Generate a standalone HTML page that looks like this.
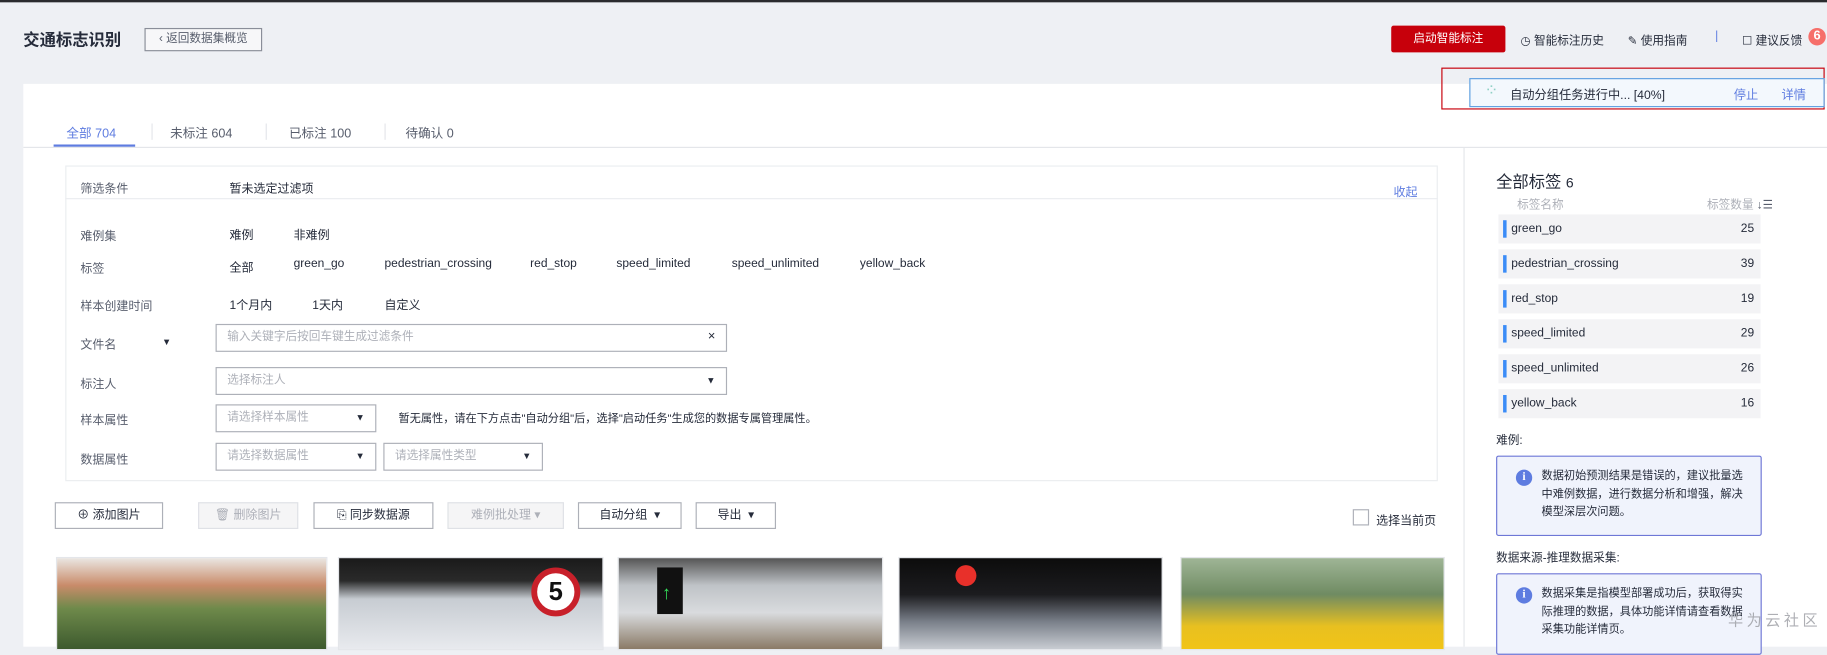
<!DOCTYPE html>
<html><head><meta charset="utf-8"><style>
*{box-sizing:border-box;margin:0;padding:0}
body{width:1827px;height:647px;overflow:hidden;background:#eef0f4;font-family:"Liberation Sans","Noto Sans CJK SC",sans-serif;color:#252b3a}
#s{position:absolute;left:0;top:0;width:1568px;height:555px;transform:scale(1.16518);transform-origin:0 0;font-size:10.3px}
.a{position:absolute;white-space:nowrap}
.btn{position:absolute;border:1px solid #adb0b8;background:#fff;height:23px;line-height:21px;text-align:center;font-size:10.3px;color:#252b3a}
.dis{background:#f5f5f6;border-color:#dfe1e6;color:#adb0b8}
.inp{position:absolute;border:1px solid #adb0b8;background:#fff;height:24px;line-height:22px;padding-left:9px;color:#adb0b8;font-size:10px}
.tri{position:absolute;right:9px;top:0;color:#252b3a;font-size:8px}
.gl{color:#575d6c}
.row{position:absolute;left:1286px;width:225px;height:25px;background:#f3f3f5;line-height:25px}
.row i{position:absolute;left:4px;top:5px;width:3px;height:15px;background:#3b8cf7}
.row span{position:absolute;left:11px;font-size:10.3px}
.row b{position:absolute;right:-3px;width:20px;font-weight:normal}
.info{position:absolute;left:1284px;width:228px;border:1px solid #6e77d6;background:#f0f3fc;border-radius:2px;padding:9px 6px 0 38px;font-size:9.6px;line-height:15.5px;color:#252b3a}
.info .ic{position:absolute;left:16px;top:11px;width:14px;height:14px;border-radius:50%;background:#5e7ce0;color:#fff;font-size:10px;line-height:14px;text-align:center;font-weight:bold;font-family:"Liberation Serif",serif}
.img{position:absolute;top:478px;height:80px;border:1px solid #e4e6ea}
</style></head><body><div id="s">
<div class="a" style="left:0;top:0;width:1568px;height:2px;background:#2a2b2e"></div>
<div class="a" style="left:20px;top:24px;font-size:14px;font-weight:bold;color:#252b3a">交通标志识别</div>
<div class="btn" style="left:124px;top:24px;width:101px;height:20px;line-height:18px;border-color:#8a8e99;background:#f7f7f9;font-size:10px;color:#575d6c">‹ 返回数据集概览</div>
<div class="a" style="left:1194px;top:22px;width:98px;height:23px;background:#c7000b;border-radius:2px;color:#fff;text-align:center;line-height:23px;font-size:10px">启动智能标注</div>
<div class="a" style="left:1305px;top:26px;font-size:10px">◷ 智能标注历史</div>
<div class="a" style="left:1397px;top:26px;font-size:10px">✎ 使用指南</div>
<div class="a" style="left:1472px;top:26px;color:#5e7ce0">|</div>
<div class="a" style="left:1495px;top:26px;font-size:10px">☐ 建议反馈</div>
<div class="a" style="left:1552px;top:24px;width:15px;height:15px;border-radius:50%;background:#f66f6a;color:#fff;text-align:center;line-height:15px;font-size:11px;font-weight:bold">6</div>
<div class="a" style="left:20px;top:72px;width:1548px;height:483px;background:#fff"></div>
<div class="a" style="left:1237px;top:58px;width:329px;height:36px;border:1px solid #c7000b"></div>
<div class="a" style="left:1261px;top:67px;width:305px;height:25px;border:1px solid #5e9fe0;background:#f3f8fd"></div>
<div class="a" style="left:1274px;top:69px;color:#8fd1c5;font-size:14px">⁘</div>
<div class="a" style="left:1296px;top:74px;font-size:10.5px">自动分组任务进行中... [40%]</div>
<div class="a" style="left:1488px;top:74px;font-size:10.5px;color:#5e7ce0">停止</div>
<div class="a" style="left:1529px;top:74px;font-size:10.5px;color:#5e7ce0">详情</div>
<div class="a" style="left:57px;top:106px;color:#5e7ce0;font-size:10.8px">全部 704</div>
<div class="a gl" style="left:146px;top:106px;font-size:10.8px">未标注 604</div>
<div class="a gl" style="left:248px;top:106px;font-size:10.8px">已标注 100</div>
<div class="a gl" style="left:348px;top:106px;font-size:10.8px">待确认 0</div>
<div class="a" style="left:130px;top:106px;width:1px;height:14px;background:#e4e6ea"></div>
<div class="a" style="left:228px;top:106px;width:1px;height:14px;background:#e4e6ea"></div>
<div class="a" style="left:330px;top:106px;width:1px;height:14px;background:#e4e6ea"></div>
<div class="a" style="left:46px;top:124px;width:70px;height:2px;background:#5e7ce0"></div>
<div class="a" style="left:20px;top:126px;width:1548px;height:1px;background:#e4e6ea"></div>
<div class="a" style="left:1256px;top:127px;width:1px;height:428px;background:#e4e6ea"></div>
<div class="a" style="left:56px;top:142px;width:1178px;height:271px;border:1px solid #ebedf0"></div>
<div class="a" style="left:56px;top:170px;width:1178px;height:1px;background:#ebedf0"></div>
<div class="a gl" style="left:69px;top:153px">筛选条件</div>
<div class="a" style="left:197px;top:153px">暂未选定过滤项</div>
<div class="a" style="left:1196px;top:156px;color:#5e7ce0">收起</div>
<div class="a gl" style="left:69px;top:194px">难例集</div>
<div class="a" style="left:197px;top:193px">难例</div><div class="a" style="left:252px;top:193px">非难例</div>
<div class="a gl" style="left:69px;top:222px">标签</div>
<div class="a" style="left:197px;top:221px">全部</div><div class="a" style="left:252px;top:221px">green_go</div><div class="a" style="left:330px;top:221px">pedestrian_crossing</div><div class="a" style="left:455px;top:221px">red_stop</div><div class="a" style="left:529px;top:221px">speed_limited</div><div class="a" style="left:628px;top:221px">speed_unlimited</div><div class="a" style="left:738px;top:221px">yellow_back</div>
<div class="a gl" style="left:69px;top:254px">样本创建时间</div>
<div class="a" style="left:197px;top:253px">1个月内</div><div class="a" style="left:268px;top:253px">1天内</div><div class="a" style="left:330px;top:253px">自定义</div>
<div class="a gl" style="left:69px;top:287px">文件名</div><div class="a" style="left:139px;top:289px;font-size:8px">▼</div>
<div class="inp" style="left:185px;top:278px;width:439px">输入关键字后按回车键生成过滤条件<span class="tri" style="font-size:11px;top:-1px">×</span></div>
<div class="a gl" style="left:69px;top:321px">标注人</div>
<div class="inp" style="left:185px;top:315px;width:439px">选择标注人<span class="tri">▼</span></div>
<div class="a gl" style="left:69px;top:352px">样本属性</div>
<div class="inp" style="left:185px;top:347px;width:138px">请选择样本属性<span class="tri">▼</span></div>
<div class="a" style="left:342px;top:351px;font-size:9.6px">暂无属性，请在下方点击"自动分组"后，选择"启动任务"生成您的数据专属管理属性。</div>
<div class="a gl" style="left:69px;top:386px">数据属性</div>
<div class="inp" style="left:185px;top:380px;width:138px">请选择数据属性<span class="tri">▼</span></div>
<div class="inp" style="left:329px;top:380px;width:137px">请选择属性类型<span class="tri">▼</span></div>
<div class="btn" style="left:47px;top:431px;width:93px">⊕ 添加图片</div>
<div class="btn dis" style="left:170px;top:431px;width:86px">🗑 删除图片</div>
<div class="btn" style="left:269px;top:431px;width:103px">⎘ 同步数据源</div>
<div class="btn dis" style="left:384px;top:431px;width:100px">难例批处理 ▾</div>
<div class="btn" style="left:496px;top:431px;width:89px">自动分组 &nbsp;▾</div>
<div class="btn" style="left:597px;top:431px;width:69px">导出 &nbsp;▾</div>
<div class="a" style="left:1161px;top:437px;width:14px;height:14px;border:1px solid #adb0b8"></div>
<div class="a" style="left:1181px;top:438px">选择当前页</div>
<div class="img" style="left:48px;width:233px;background:linear-gradient(180deg,#eae6e2 0,#c98b6a 30%,#6f8a4b 55%,#3d5a2e 100%)"></div>
<div class="img" style="left:290px;width:228px;background:linear-gradient(180deg,#1a1a1a 0,#2a2a2a 25%,#c7ccd2 45%,#e8eaee 100%)"><div class="a" style="left:165px;top:8px;width:42px;height:42px;border-radius:50%;border:5px solid #c8202a;background:#fff;text-align:center;line-height:32px;font-weight:bold;font-size:22px;color:#111">5</div></div>
<div class="img" style="left:530px;width:228px;background:linear-gradient(180deg,#555 0,#bfc3c7 30%,#d9dbde 60%,#8a7a66 100%)"><div class="a" style="left:33px;top:8px;width:22px;height:40px;background:#111"></div><div class="a" style="left:37px;top:22px;color:#35e05a;font-size:16px">↑</div></div>
<div class="img" style="left:771px;width:227px;background:linear-gradient(180deg,#0c0c0c 0,#1c1c1f 40%,#7a808a 70%,#c8ccd2 100%)"><div class="a" style="left:48px;top:6px;width:18px;height:18px;border-radius:50%;background:#e8302a"></div></div>
<div class="img" style="left:1013px;width:227px;background:linear-gradient(180deg,#9fb596 0,#6f8b62 40%,#e8c020 75%,#f1c417 100%)"></div>
<div class="a" style="left:1284px;top:146px;font-size:14px">全部标签 <span style="font-size:12px">6</span></div>
<div class="a" style="left:1302px;top:167px;color:#adb0b8;font-size:10px">标签名称</div>
<div class="a" style="left:1465px;top:167px;color:#adb0b8;font-size:10px">标签数量 <span style="color:#575d6c">↓☰</span></div>
<div class="row" style="top:184px"><i></i><span>green_go</span><b>25</b></div>
<div class="row" style="top:214px"><i></i><span>pedestrian_crossing</span><b>39</b></div>
<div class="row" style="top:244px"><i></i><span>red_stop</span><b>19</b></div>
<div class="row" style="top:274px"><i></i><span>speed_limited</span><b>29</b></div>
<div class="row" style="top:304px"><i></i><span>speed_unlimited</span><b>26</b></div>
<div class="row" style="top:334px"><i></i><span>yellow_back</span><b>16</b></div>
<div class="a" style="left:1284px;top:369px;font-size:10px">难例:</div>
<div class="info" style="top:391px;height:69px"><span class="ic">i</span>数据初始预测结果是错误的，建议批量选中难例数据，进行数据分析和增强，解决模型深层次问题。</div>
<div class="a" style="left:1284px;top:470px;font-size:10px">数据来源-推理数据采集:</div>
<div class="info" style="top:492px;height:70px"><span class="ic">i</span>数据采集是指模型部署成功后，获取得实际推理的数据，具体功能详情请查看数据采集功能详情页。</div>
<div class="a" style="left:1483px;top:522px;font-size:13px;color:#9a9ca2;letter-spacing:3px;opacity:.8">华为云社区</div>
</div></body></html>
